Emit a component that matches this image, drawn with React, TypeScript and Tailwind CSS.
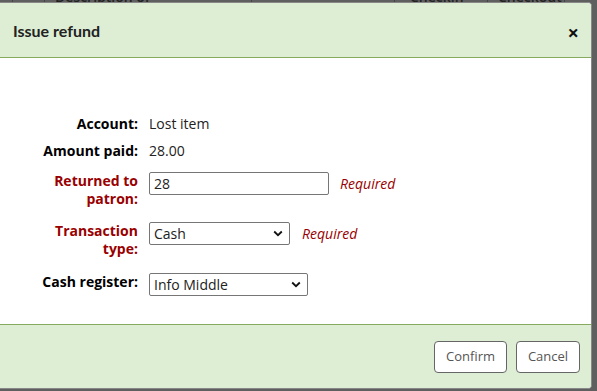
import React from "react";

const font = { fontFamily: '"Open Sans", "Noto Sans", sans-serif' };
const titleFont = { fontFamily: 'Lato, "Open Sans", sans-serif' };

function Chevron() {
  return (
    <svg width="10" height="7" viewBox="0 0 10 7" className="shrink-0">
      <path d="M1.2 1.5 L5 5.2 L8.8 1.5" fill="none" stroke="#111" strokeWidth="1.8" />
    </svg>
  );
}

export default function App() {
  return (
    <div className="relative w-[597px] h-[391px] overflow-hidden bg-[#5f5f5f]" style={font}>
      {/* backdrop table header peeking */}
      <div className="flex h-[14px] -mt-[10px] text-[14px] leading-[14px] text-[#222] font-semibold whitespace-nowrap">
        <div className="w-[13px] border-r border-[#444]"></div>
        <div className="w-[32px] border-r border-[#444]"></div>
        <div className="w-[97px] border-r border-[#444] pl-[10px]">Description of</div>
        <div className="w-[110px] border-r border-[#444]"></div>
        <div className="w-[143px] border-r border-[#444]"></div>
        <div className="w-[93px] border-r border-[#444] pl-[15px]">Checkin</div>
        <div className="w-[77px] border-r border-[#444] pl-[10px]">Checkout</div>
      </div>
      <div className="absolute left-[-4px] top-[2px] w-[596px] h-[387px] bg-white rounded-[4px] border border-[#888] flex flex-col overflow-hidden">
        <div className="h-[55px] bg-[#ddeed4] border-b border-[#86ab5e] flex items-center justify-between pl-[16px] pr-[12px]">
          <div className="text-[16px] font-bold text-[#222] mt-[1px]" style={titleFont}>Issue refund</div>
          <div className="text-[20px] font-bold text-[#111] leading-none mt-[6px]">×</div>
        </div>
        <div className="flex-1 pt-[57px] text-[14px] text-[#222]">
          <div className="grid grid-cols-[141px_1fr] gap-x-[11px] items-start">
            <div className="text-right font-bold text-black leading-[18px]">Account:</div>
            <div className="leading-[18px]">Lost item</div>
          </div>
          <div className="grid grid-cols-[141px_1fr] gap-x-[11px] items-start mt-[9px]">
            <div className="text-right font-bold text-black leading-[18px]">Amount paid:</div>
            <div className="leading-[18px]">28.00</div>
          </div>
          <div className="grid grid-cols-[141px_1fr] gap-x-[11px] items-start mt-[12px]">
            <div className="text-right font-bold text-[#990000] leading-[18px]">
              Returned to<br />patron:
            </div>
            <div className="flex items-center">
              <div className="w-[180px] h-[23px] border border-[#767676] rounded-[2px] px-[4px] flex items-center">28</div>
              <span className="ml-[11px] italic text-[#990000]">Required</span>
            </div>
          </div>
          <div className="grid grid-cols-[141px_1fr] gap-x-[11px] items-start mt-[14px]">
            <div className="text-right font-bold text-[#990000] leading-[18px]">
              Transaction<br />type:
            </div>
            <div className="flex items-center">
              <div className="w-[141px] h-[23px] border border-[#767676] rounded-[2px] pl-[4px] pr-[6px] flex items-center justify-between">
                <span>Cash</span>
                <Chevron />
              </div>
              <span className="ml-[12px] italic text-[#990000]">Required</span>
            </div>
          </div>
          <div className="grid grid-cols-[141px_1fr] gap-x-[11px] items-start mt-[15px]">
            <div className="text-right font-bold text-black leading-[18px]">Cash register:</div>
            <div className="flex items-center">
              <div className="w-[159px] h-[23px] border border-[#767676] rounded-[2px] pl-[4px] pr-[6px] flex items-center justify-between">
                <span>Info Middle</span>
                <Chevron />
              </div>
            </div>
          </div>
        </div>
        <div className="h-[64px] bg-[#ddeed4] border-t border-[#86ab5e] flex items-center justify-end gap-[9px] pr-[11px]">
          <div className="w-[73px] h-[32px] border border-[#666] rounded-[4px] bg-white flex items-center justify-center text-[13px] text-[#555]">Confirm</div>
          <div className="w-[64px] h-[32px] border border-[#666] rounded-[4px] bg-white flex items-center justify-center text-[13px] text-[#555]">Cancel</div>
        </div>
      </div>
    </div>
  );
}
